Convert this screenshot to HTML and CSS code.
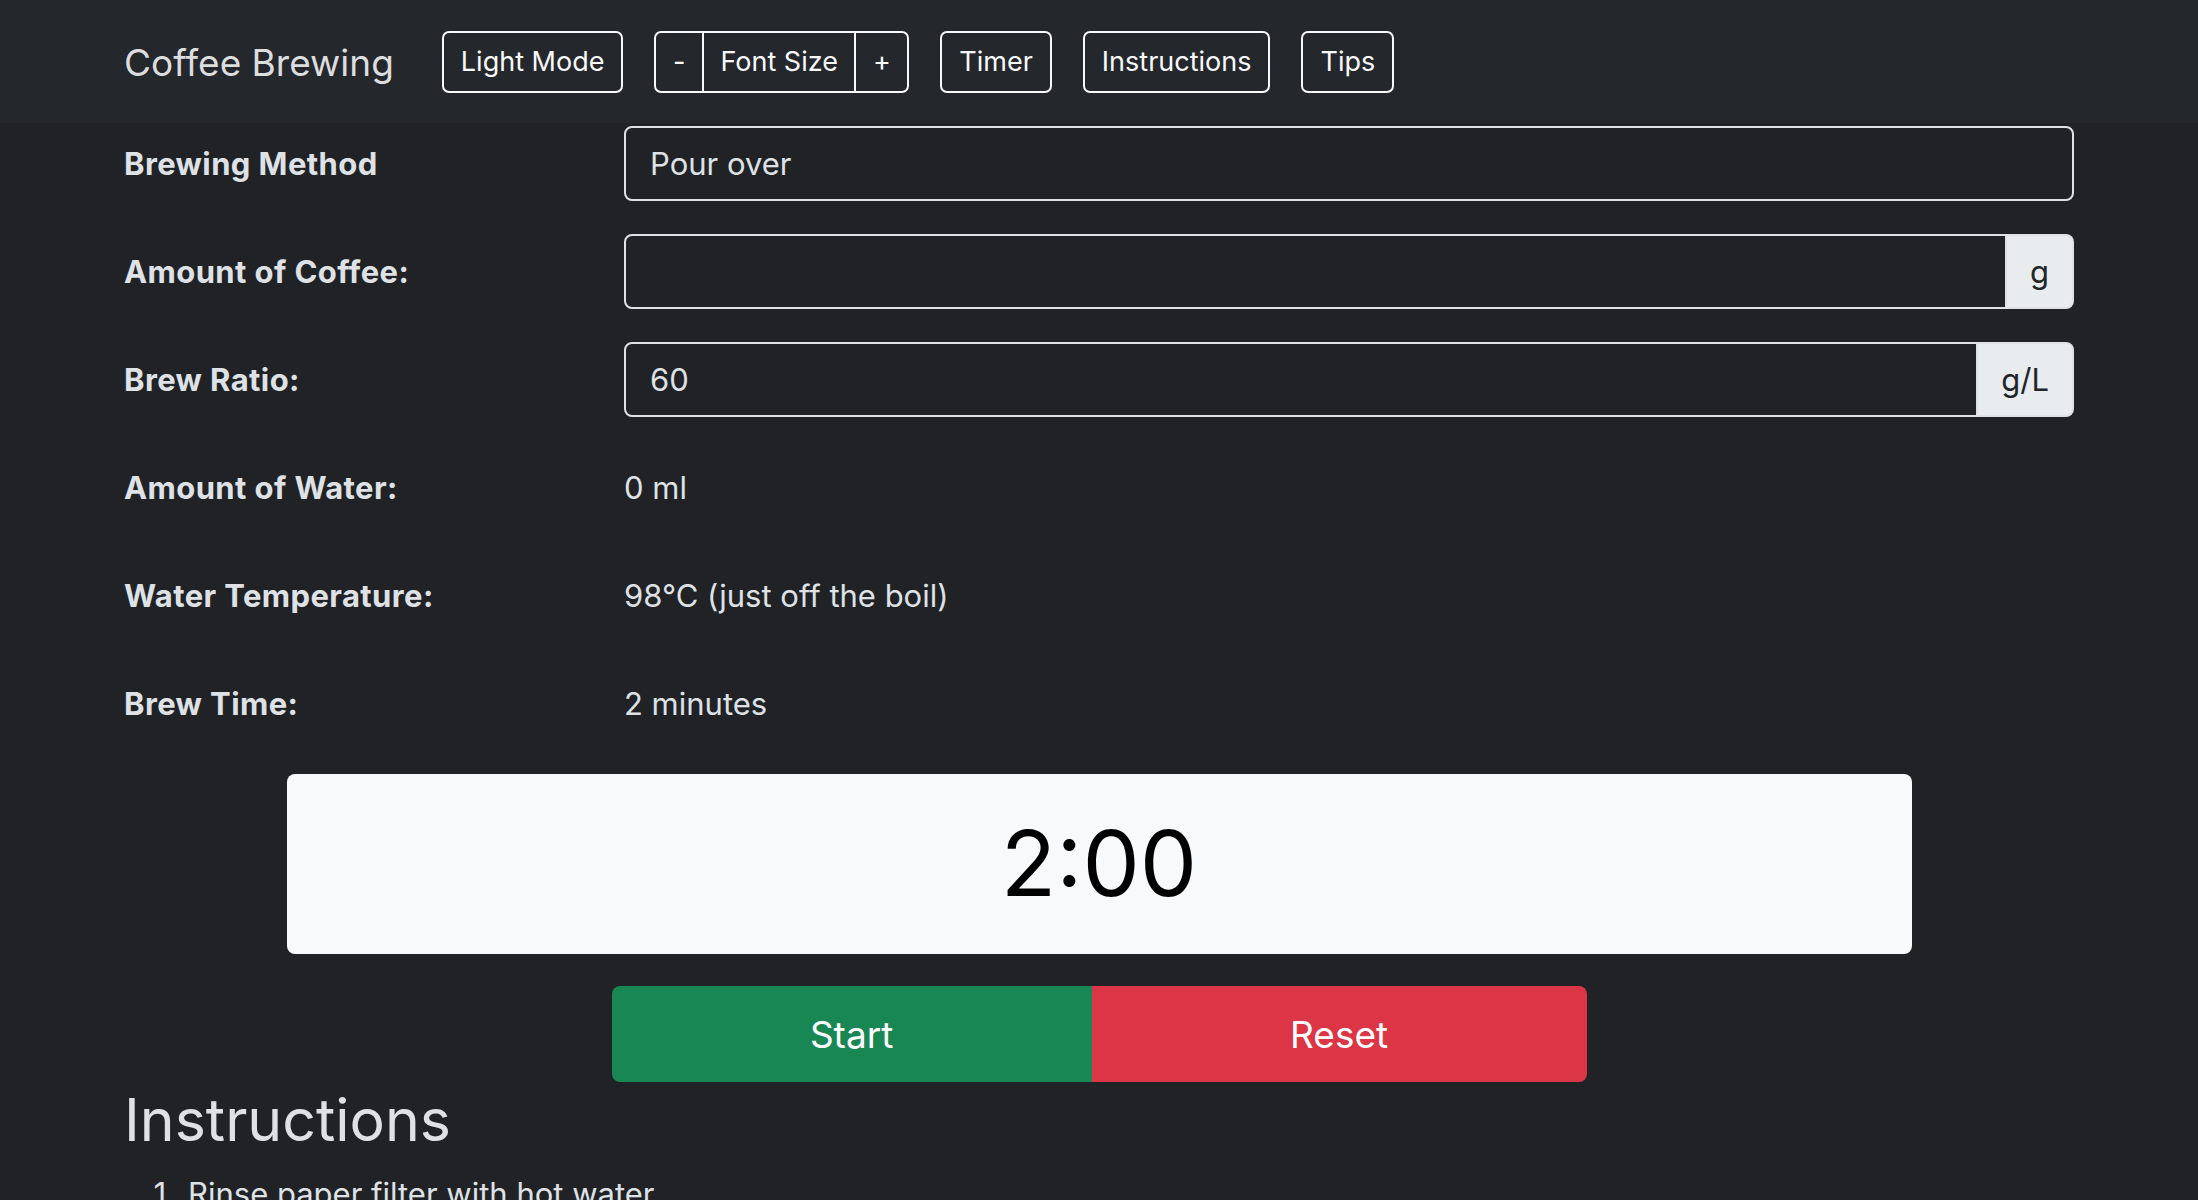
FILE: index.html
```html
<!DOCTYPE html>
<html lang="en">
<head>
<meta charset="utf-8">
<title>Coffee Brewing</title>
<link rel="stylesheet" href="styles.css">
</head>
<body>
<nav class="navbar">
  <div class="container nav-inner">
    <span class="brand">Coffee Brewing</span>
    <button class="nav-btn">Light Mode</button>
    <div class="btn-group">
      <button class="nav-btn grp">-</button>
      <button class="nav-btn grp">Font Size</button>
      <button class="nav-btn grp">+</button>
    </div>
    <button class="nav-btn">Timer</button>
    <button class="nav-btn">Instructions</button>
    <button class="nav-btn">Tips</button>
  </div>
</nav>
<main class="container">
  <div class="form-row">
    <label class="form-label">Brewing Method</label>
    <div class="field"><div class="input select">Pour over</div></div>
  </div>
  <div class="form-row">
    <label class="form-label">Amount of Coffee:</label>
    <div class="field input-group"><div class="input"></div><span class="addon">g</span></div>
  </div>
  <div class="form-row">
    <label class="form-label">Brew Ratio:</label>
    <div class="field input-group"><div class="input">60</div><span class="addon">g/L</span></div>
  </div>
  <div class="form-row">
    <label class="form-label">Amount of Water:</label>
    <div class="field plain">0 ml</div>
  </div>
  <div class="form-row">
    <label class="form-label">Water Temperature:</label>
    <div class="field plain">98°C (just off the boil)</div>
  </div>
  <div class="form-row">
    <label class="form-label">Brew Time:</label>
    <div class="field plain">2 minutes</div>
  </div>
  <div class="timer">2:00</div>
  <div class="timer-actions">
    <button class="big-btn start">Start</button>
    <button class="big-btn reset">Reset</button>
  </div>
  <h2 class="section-title">Instructions</h2>
  <ol class="steps">
    <li>Rinse paper filter with hot water</li>
    <li>Add ground coffee to the filter</li>
    <li>Pour water slowly in circles</li>
  </ol>
</main>
</body>
</html>
```
FILE: styles.css
```css
* { box-sizing: border-box; }
html, body { margin: 0; padding: 0; }
body {
  background: #212226;
  color: #dee2e6;
  font-family: Inter, "Noto Sans", "Liberation Sans", sans-serif;
  font-size: 31px;
  line-height: 1.5;
  overflow: hidden;
}
.container {
  width: 1950px;
  margin: 0 auto;
}
.navbar {
  background: #24272b;
  height: 123px;
}
.nav-inner {
  display: flex;
  align-items: center;
  height: 100%;
  gap: 31px;
}
.brand {
  font-size: 37px;
  color: #dcdddf;
  margin-right: 17px;
  line-height: 1;
  margin-top: 2px;
}
.nav-btn {
  font-family: inherit;
  font-size: 27px;
  line-height: 42px;
  height: 62px;
  padding: 8px 17px;
  background: transparent;
  color: #f8f9fa;
  border: 2px solid #f8f9fa;
  border-radius: 7px;
}
.btn-group { display: flex; }
.btn-group .grp { border-radius: 0; padding: 8px 16.5px; }
.btn-group .grp + .grp { margin-left: -2px; }
.btn-group .grp:first-child { border-radius: 7px 0 0 7px; }
.btn-group .grp:last-child { border-radius: 0 7px 7px 0; }

main.container { padding-top: 3px; }
.form-row {
  display: grid;
  grid-template-columns: 500px 1fr;
  align-items: center;
  min-height: 75px;
  margin-bottom: 33px;
}
.form-label {
  font-weight: 700;
  color: #dee2e6;
  letter-spacing: 0.4px;
  padding-top: 2px;
}
.field { min-height: 75px; }
.input {
  height: 75px;
  border: 2px solid #dee2e6;
  border-radius: 8px;
  padding: 2px 24px 0;
  display: flex;
  align-items: center;
  color: #dee2e6;
  background: #212226;
}
.input-group { display: flex; }
.input-group .input {
  flex: 1;
  border-radius: 8px 0 0 8px;
}
.addon {
  height: 75px;
  display: flex;
  align-items: center;
  padding: 2px 23px 0;
  background: #e9ecef;
  color: #212529;
  border: 2px solid #dee2e6;
  border-left: none;
  border-radius: 0 8px 8px 0;
}
.plain {
  display: flex;
  align-items: center;
  padding-top: 2px;
}
.timer {
  width: 1625px;
  height: 180px;
  margin: 0 auto;
  background: #f8f9fa;
  color: #000;
  border-radius: 8px;
  display: flex;
  align-items: center;
  justify-content: center;
  font-size: 91px;
  line-height: 1;
  padding-bottom: 2px;
}
.timer-actions {
  width: 975px;
  margin: 32px auto 0;
  display: flex;
}
.big-btn {
  flex: 1 1 auto;
  height: 96px;
  border: none;
  font-family: inherit;
  font-size: 37px;
  color: #fff;
  padding: 0 32px;
}
.start { background: #198754; border-radius: 8px 0 0 8px; }
.reset { background: #dc3545; border-radius: 0 8px 8px 0; }
.section-title {
  font-size: 59px;
  font-weight: 400;
  line-height: 1.2;
  margin: 3px 0 15px;
  color: #dee2e6;
}
.steps {
  margin: 0;
  padding-left: 64px;
}
```
